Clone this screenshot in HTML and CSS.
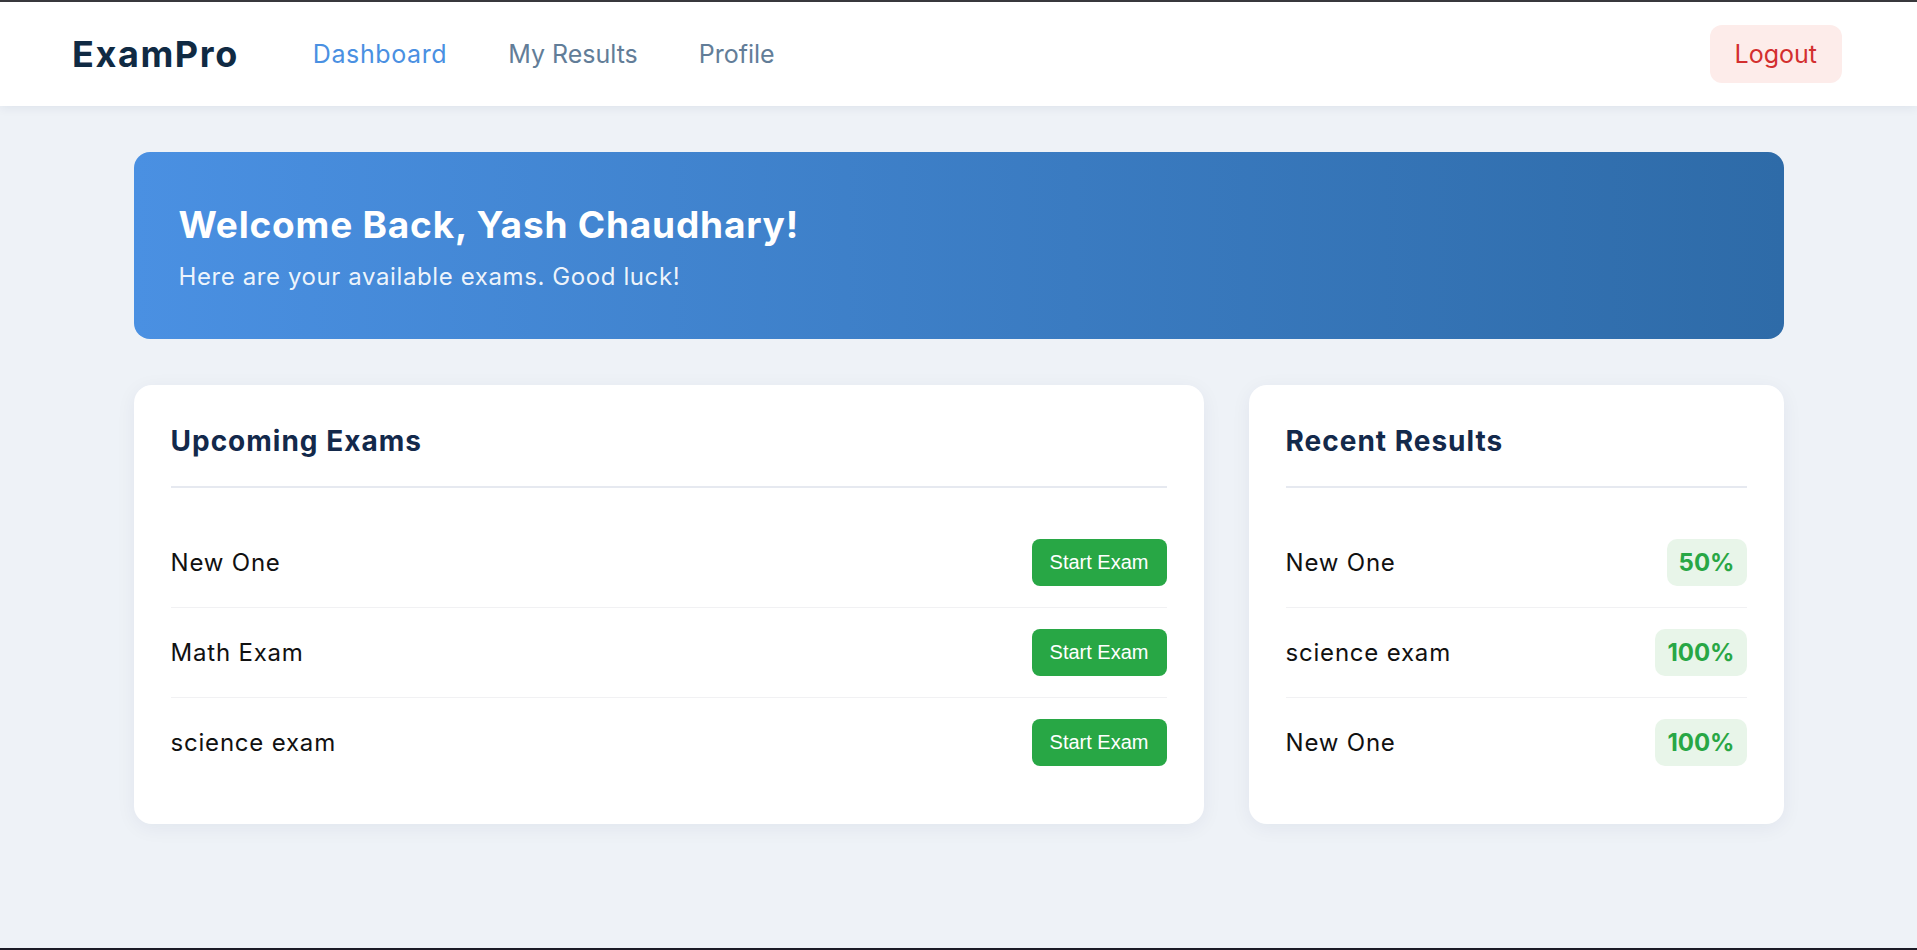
FILE: index.html
```html
<!DOCTYPE html>
<html lang="en">
<head>
<meta charset="utf-8">
<title>ExamPro - Dashboard</title>
<link rel="stylesheet" href="styles.css">
</head>
<body>
<div class="frame">
  <header class="navbar">
    <div class="logo">ExamPro</div>
    <nav class="nav-links">
      <a class="nav-link active" href="#">Dashboard</a>
      <a class="nav-link" href="#">My Results</a>
      <a class="nav-link" href="#">Profile</a>
    </nav>
    <a class="logout" href="#">Logout</a>
  </header>

  <main class="container">
    <section class="welcome">
      <h1 class="welcome-title">Welcome Back, Yash Chaudhary!</h1>
      <p class="welcome-sub">Here are your available exams. Good luck!</p>
    </section>

    <div class="grid">
      <section class="card">
        <h2 class="card-title">Upcoming Exams</h2>
        <ul class="list">
          <li class="row"><span class="row-name">New One</span><button class="btn-start">Start Exam</button></li>
          <li class="row"><span class="row-name">Math Exam</span><button class="btn-start">Start Exam</button></li>
          <li class="row"><span class="row-name">science exam</span><button class="btn-start">Start Exam</button></li>
        </ul>
      </section>

      <section class="card">
        <h2 class="card-title">Recent Results</h2>
        <ul class="list">
          <li class="row"><span class="row-name">New One</span><span class="score">50%</span></li>
          <li class="row"><span class="row-name">science exam</span><span class="score">100%</span></li>
          <li class="row"><span class="row-name">New One</span><span class="score">100%</span></li>
        </ul>
      </section>
    </div>
  </main>
</div>
</body>
</html>
```

FILE: styles.css
```css
* {
  box-sizing: border-box;
}

html, body {
  margin: 0;
  padding: 0;
}

body {
  font-family: "Inter", "Noto Sans", sans-serif;
  background: #eef2f7;
  color: #111;
}

.frame {
  min-height: 100vh;
  border-top: 2px solid #3a3a3d;
  border-bottom: 2px solid #1b1b26;
  display: flex;
  flex-direction: column;
}

.navbar {
  height: 104px;
  background: #ffffff;
  display: flex;
  align-items: center;
  padding: 0 75px 0 72px;
  box-shadow: 0 2px 10px rgba(20, 40, 80, 0.07);
}

.logo {
  font-size: 36px;
  font-weight: 700;
  color: #102a43;
  letter-spacing: 1.6px;
}

.nav-links {
  display: flex;
  gap: 61px;
  margin-left: 74px;
}

.nav-link {
  font-size: 25px;
  color: #627d98;
  text-decoration: none;
}

.nav-link.active {
  color: #4a90e2;
  letter-spacing: 0.6px;
}

.logout {
  margin-left: auto;
  font-size: 25px;
  color: #d32f2f;
  background: #fdecea;
  text-decoration: none;
  padding: 11px 25px;
  border-radius: 12px;
  line-height: 36px;
}

.container {
  width: 1650px;
  margin: 46px auto 0;
}

.welcome {
  background: linear-gradient(90deg, #4a90e2 0%, #2e6ba8 100%);
  border-radius: 16px;
  padding: 48px 45px 44px;
  color: #ffffff;
}

.welcome-title {
  margin: 0 0 10px;
  font-size: 37px;
  font-weight: 700;
  line-height: 49px;
  letter-spacing: 0.8px;
}

.welcome-sub {
  margin: 0;
  font-size: 24px;
  line-height: 36px;
  letter-spacing: 0.6px;
  color: rgba(255, 255, 255, 0.92);
}

.grid {
  display: grid;
  grid-template-columns: 2fr 1fr;
  gap: 45px;
  margin-top: 46px;
}

.card {
  background: #ffffff;
  border-radius: 18px;
  padding: 38px 37px 37px;
  box-shadow: 0 4px 20px rgba(20, 40, 80, 0.06);
}

.card-title {
  margin: 0 0 30px;
  font-size: 28px;
  font-weight: 700;
  line-height: 36px;
  letter-spacing: 1px;
  color: #13294b;
  padding-bottom: 27px;
  border-bottom: 2px solid #e6e9f0;
}

.list {
  list-style: none;
  margin: 0;
  padding: 0;
}

.row {
  display: flex;
  justify-content: space-between;
  align-items: center;
  padding: 21px 0;
  border-bottom: 1px solid #f1f1f3;
}

.row:last-child {
  border-bottom: none;
}

.row-name {
  font-size: 24px;
  letter-spacing: 0.8px;
  color: #111111;
}

.btn-start {
  font-family: "Liberation Sans", Arial, sans-serif;
  font-size: 20px;
  line-height: 23px;
  color: #ffffff;
  background: #28a745;
  border: none;
  border-radius: 8px;
  padding: 12px 18px;
  cursor: pointer;
}

.score {
  font-size: 24px;
  font-weight: 700;
  line-height: 35px;
  color: #28a745;
  background: #e8f5e9;
  padding: 6px 12px;
  border-radius: 10px;
}
```
